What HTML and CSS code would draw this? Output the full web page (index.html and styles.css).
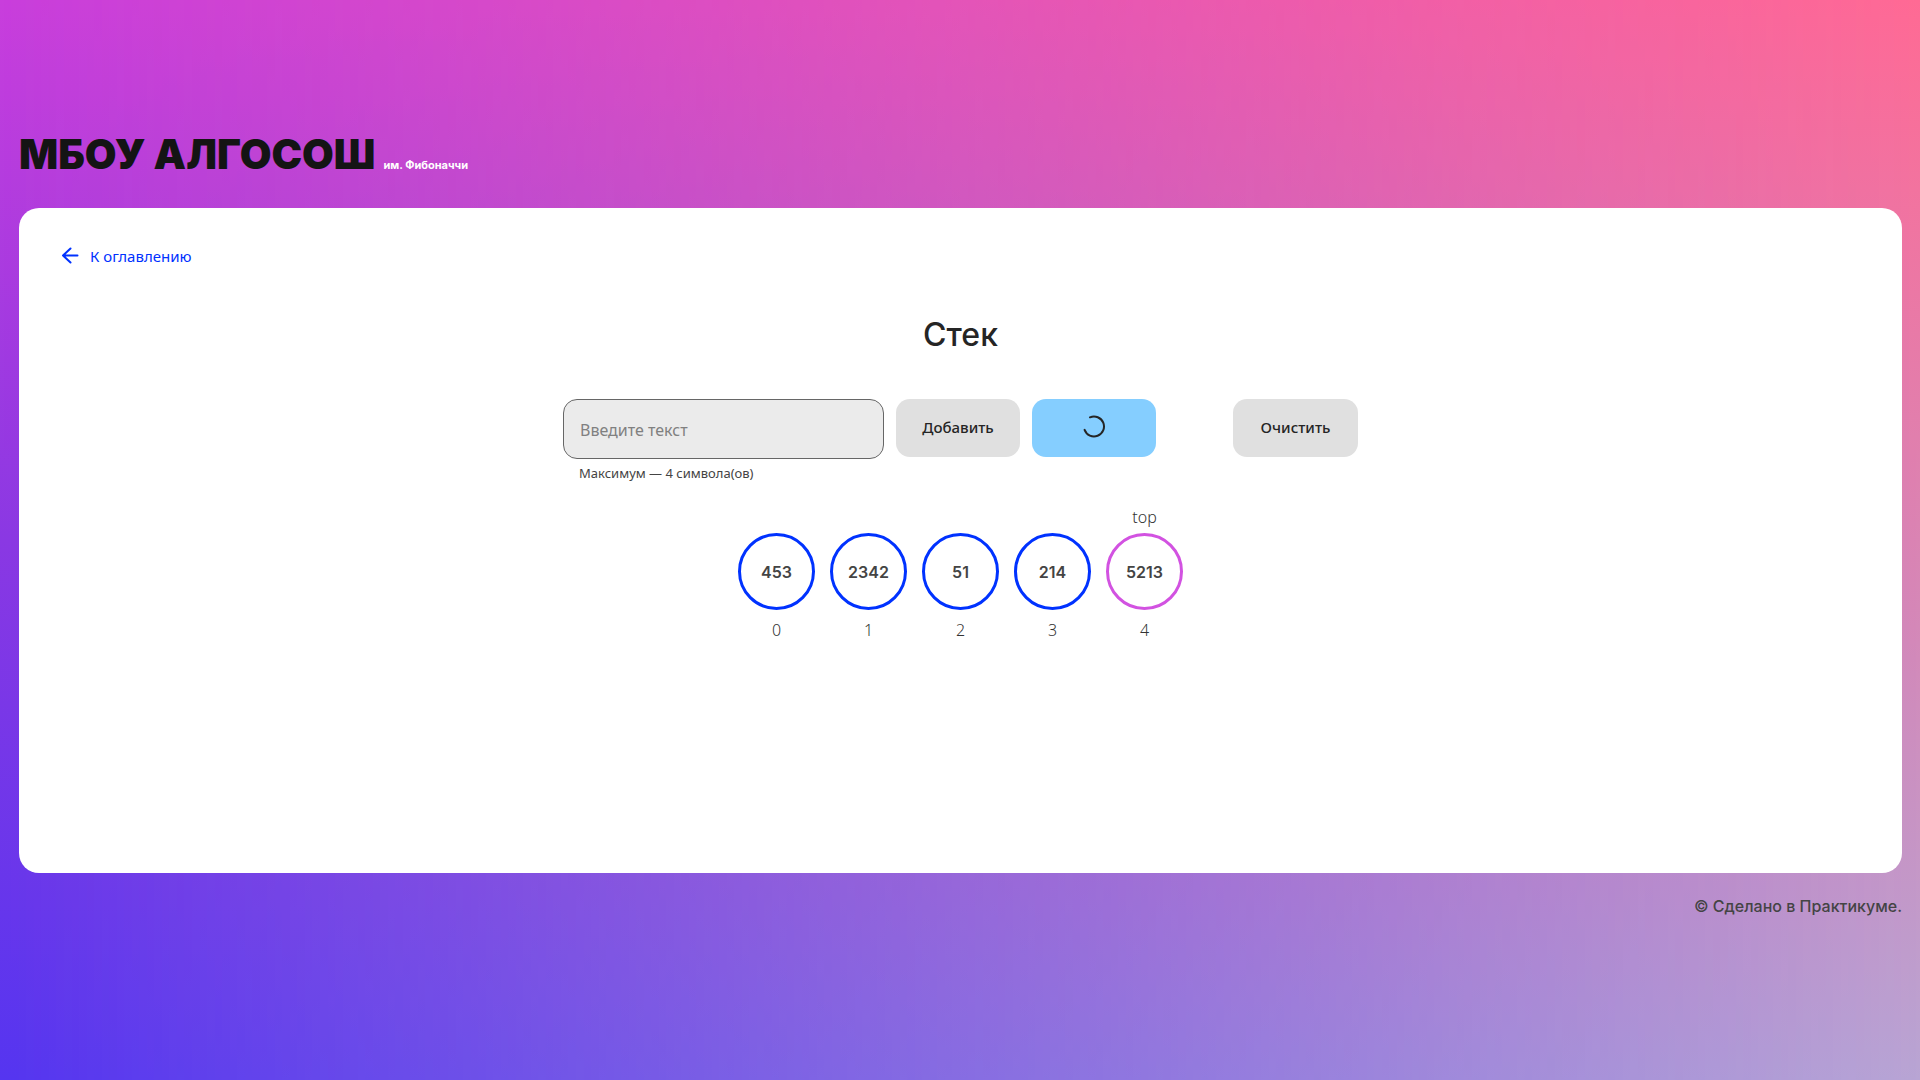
FILE: index.html
```html
<!DOCTYPE html>
<html lang="ru">
<head>
<meta charset="utf-8">
<meta name="viewport" content="width=device-width, initial-scale=1">
<title>Стек</title>
<link rel="stylesheet" href="styles.css">
</head>
<body>
<div class="page">
  <header class="header">
    <h1 class="brand">МБОУ АЛГОСОШ</h1>
    <p class="brand-note">им. Фибоначчи</p>
  </header>
  <main class="card">
    <a class="back" href="#">
      <svg class="back-icon" width="24" height="24" viewBox="0 0 24 24" fill="none" stroke="currentColor" stroke-width="2" stroke-linecap="round" stroke-linejoin="round" aria-hidden="true"><path d="M19.5 11.5H5M12.5 4.500l-7.500 7 7.500 7"/></svg>
      <span>К оглавлению</span>
    </a>
    <h2 class="title">Стек</h2>
    <form class="form">
      <div class="field">
        <input class="input" type="text" maxlength="4" placeholder="Введите текст" aria-label="Введите текст" aria-describedby="hint" disabled>
        <span class="hint" id="hint">Максимум — 4 символа(ов)</span>
      </div>
      <button class="button" type="button" disabled>Добавить</button>
      <button class="button button-loading" type="button" aria-label="Удалить" disabled>
        <svg width="24" height="24" viewBox="0 0 24 24" fill="none" stroke="currentColor" stroke-width="2" stroke-linecap="round" aria-hidden="true"><path d="M8 2.300A10 10 0 1 1 2.600 14.900"/></svg>
      </button>
      <button class="button button-clear" type="button" disabled>Очистить</button>
    </form>
    <ul class="stack">
      <li class="item"><span class="mark"></span><span class="circle">453</span><span class="mark">0</span></li>
      <li class="item"><span class="mark"></span><span class="circle">2342</span><span class="mark">1</span></li>
      <li class="item"><span class="mark"></span><span class="circle">51</span><span class="mark">2</span></li>
      <li class="item"><span class="mark"></span><span class="circle">214</span><span class="mark">3</span></li>
      <li class="item"><span class="mark">top</span><span class="circle circle-changing">5213</span><span class="mark">4</span></li>
    </ul>
  </main>
  <footer class="footer">© Сделано в Практикуме.</footer>
</div>
</body>
</html>
```
FILE: styles.css
```css
* {
  box-sizing: border-box;
}

body {
  margin: 0;
  font-family: "Noto Sans", "Open Sans", sans-serif;
  font-size: 16px;
  color: #444;
  background: linear-gradient(#c93edc, #8a38e3 50%, #5535f0) no-repeat;
}

/* Second colour ramp, fading in from left to right */
body::before {
  content: "";
  position: absolute;
  inset: 0;
  z-index: -1;
  background: linear-gradient(#ff6a94, #d488b8 58%, #b8a5d4);
  -webkit-mask-image: linear-gradient(to right, transparent, #000);
  mask-image: linear-gradient(to right, transparent, #000);
}

.page {
  display: flex;
  flex-direction: column;
  min-height: 100vh;
  padding: 130px 18px 161px 19px;
}

.header {
  display: flex;
  align-items: baseline;
  gap: 8px;
  height: 78px;
}

.brand {
  margin: 0;
  font-family: "Inter", sans-serif;
  font-size: 41px;
  line-height: 48px;
  font-weight: 900;
  color: #141414;
}

.brand-note {
  margin: 0;
  font-family: "Inter", sans-serif;
  font-size: 11px;
  font-weight: 700;
  color: #fff;
}

.card {
  display: flex;
  flex-direction: column;
  flex: 1;
  padding: 36px 39px;
  background: #fff;
  border-radius: 20px;
}

.back {
  display: flex;
  align-items: center;
  align-self: flex-start;
  gap: 8px;
  font-size: 15px;
  line-height: 24px;
  color: #0032ff;
  text-decoration: none;
}

.title {
  margin: 47px 0 0;
  font-family: "Inter", sans-serif;
  font-size: 32px;
  line-height: 40px;
  font-weight: 500;
  text-align: center;
  color: #252525;
}

.form {
  display: flex;
  align-items: flex-start;
  justify-content: center;
  gap: 12px;
  margin-top: 44px;
}

.field {
  display: flex;
  flex-direction: column;
  gap: 4px;
  width: 321px;
}

.input {
  width: 100%;
  height: 60px;
  padding: 2px 16px 0;
  font-family: inherit;
  font-size: 16px;
  background: #ebebeb;
  border: 1px solid #666;
  border-radius: 14px;
}

.input::placeholder {
  color: #808080;
}

.hint {
  padding-left: 16px;
  font-size: 13px;
  line-height: 20px;
}

.button {
  display: flex;
  align-items: center;
  justify-content: center;
  width: 124px;
  height: 58px;
  padding: 0 0 2px;
  font-family: inherit;
  font-size: 15px;
  font-weight: 500;
  color: #252525;
  background: #e0e0e0;
  border: 0;
  border-radius: 14px;
}

.button-loading {
  background: #85ceff;
}

.button-clear {
  width: 125px;
  margin-left: 65px;
}

.stack {
  display: flex;
  justify-content: center;
  gap: 15px;
  margin: 22px 0 0;
  padding: 0;
  list-style: none;
}

.item {
  display: flex;
  flex-direction: column;
  align-items: center;
  gap: 4px;
}

.mark {
  height: 24px;
  line-height: 24px;
  font-weight: 300;
  color: #333;
}

.circle {
  display: flex;
  align-items: center;
  justify-content: center;
  width: 77px;
  height: 77px;
  margin-bottom: 4px;
  font-family: "Inter", sans-serif;
  font-size: 16px;
  font-weight: 600;
  border: 3px solid #0032ff;
  border-radius: 50%;
}

.circle-changing {
  border-color: #d252e1;
}

.footer {
  margin-top: 20px;
  font-family: "Inter", sans-serif;
  font-size: 16px;
  line-height: 26px;
  font-weight: 500;
  text-align: right;
}
```
